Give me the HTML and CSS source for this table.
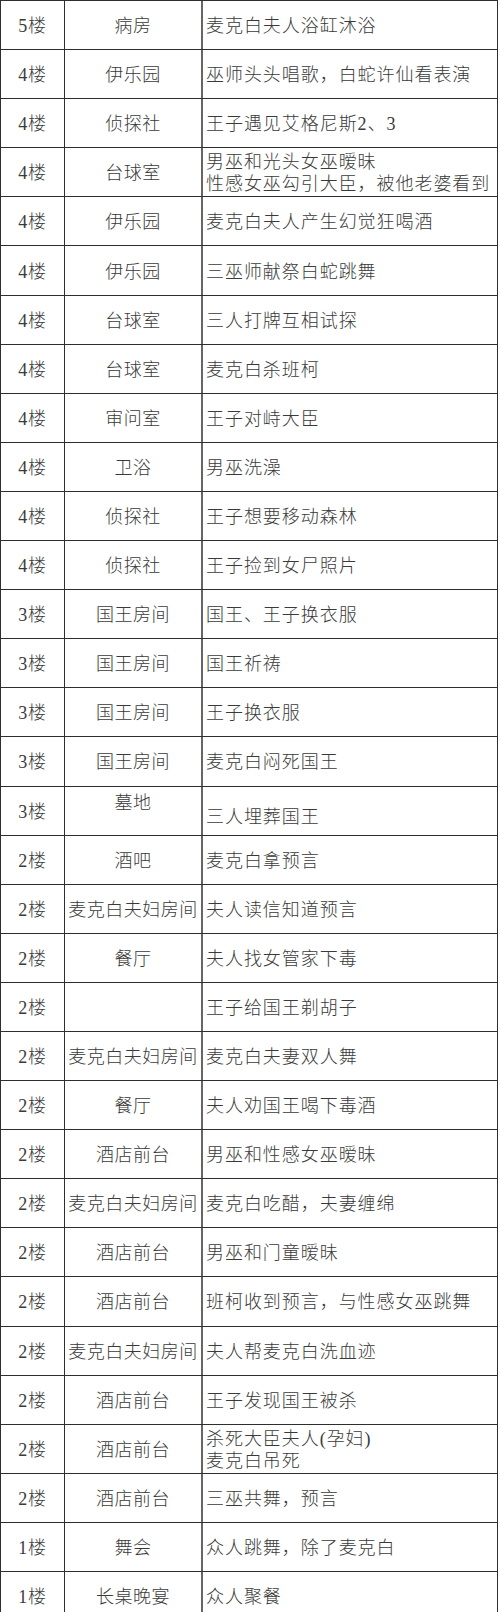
FILE: index.html
```html
<!DOCTYPE html>
<html lang="zh-CN">
<head>
<meta charset="utf-8">
<title>麦克白场景表</title>
<link rel="stylesheet" href="styles.css">
</head>
<body>
<div class="table">
  <div class="row"><div class="cell floor">5楼</div><div class="cell room">病房</div><div class="cell scene">麦克白夫人浴缸沐浴</div></div>
  <div class="row"><div class="cell floor">4楼</div><div class="cell room">伊乐园</div><div class="cell scene">巫师头头唱歌，白蛇许仙看表演</div></div>
  <div class="row"><div class="cell floor">4楼</div><div class="cell room">侦探社</div><div class="cell scene">王子遇见艾格尼斯2、3</div></div>
  <div class="row"><div class="cell floor">4楼</div><div class="cell room">台球室</div><div class="cell scene">男巫和光头女巫暧昧<br>性感女巫勾引大臣，被他老婆看到</div></div>
  <div class="row"><div class="cell floor">4楼</div><div class="cell room">伊乐园</div><div class="cell scene">麦克白夫人产生幻觉狂喝酒</div></div>
  <div class="row"><div class="cell floor">4楼</div><div class="cell room">伊乐园</div><div class="cell scene">三巫师献祭白蛇跳舞</div></div>
  <div class="row"><div class="cell floor">4楼</div><div class="cell room">台球室</div><div class="cell scene">三人打牌互相试探</div></div>
  <div class="row"><div class="cell floor">4楼</div><div class="cell room">台球室</div><div class="cell scene">麦克白杀班柯</div></div>
  <div class="row"><div class="cell floor">4楼</div><div class="cell room">审问室</div><div class="cell scene">王子对峙大臣</div></div>
  <div class="row"><div class="cell floor">4楼</div><div class="cell room">卫浴</div><div class="cell scene">男巫洗澡</div></div>
  <div class="row"><div class="cell floor">4楼</div><div class="cell room">侦探社</div><div class="cell scene">王子想要移动森林</div></div>
  <div class="row"><div class="cell floor">4楼</div><div class="cell room">侦探社</div><div class="cell scene">王子捡到女尸照片</div></div>
  <div class="row"><div class="cell floor">3楼</div><div class="cell room">国王房间</div><div class="cell scene">国王、王子换衣服</div></div>
  <div class="row"><div class="cell floor">3楼</div><div class="cell room">国王房间</div><div class="cell scene">国王祈祷</div></div>
  <div class="row"><div class="cell floor">3楼</div><div class="cell room">国王房间</div><div class="cell scene">王子换衣服</div></div>
  <div class="row"><div class="cell floor">3楼</div><div class="cell room">国王房间</div><div class="cell scene">麦克白闷死国王</div></div>
  <div class="row"><div class="cell floor">3楼</div><div class="cell room room-top">墓地</div><div class="cell scene scene-low">三人埋葬国王</div></div>
  <div class="row"><div class="cell floor">2楼</div><div class="cell room">酒吧</div><div class="cell scene">麦克白拿预言</div></div>
  <div class="row"><div class="cell floor">2楼</div><div class="cell room">麦克白夫妇房间</div><div class="cell scene">夫人读信知道预言</div></div>
  <div class="row"><div class="cell floor">2楼</div><div class="cell room">餐厅</div><div class="cell scene">夫人找女管家下毒</div></div>
  <div class="row"><div class="cell floor">2楼</div><div class="cell room"></div><div class="cell scene">王子给国王剃胡子</div></div>
  <div class="row"><div class="cell floor">2楼</div><div class="cell room">麦克白夫妇房间</div><div class="cell scene">麦克白夫妻双人舞</div></div>
  <div class="row"><div class="cell floor">2楼</div><div class="cell room">餐厅</div><div class="cell scene">夫人劝国王喝下毒酒</div></div>
  <div class="row"><div class="cell floor">2楼</div><div class="cell room">酒店前台</div><div class="cell scene">男巫和性感女巫暧昧</div></div>
  <div class="row"><div class="cell floor">2楼</div><div class="cell room">麦克白夫妇房间</div><div class="cell scene">麦克白吃醋，夫妻缠绵</div></div>
  <div class="row"><div class="cell floor">2楼</div><div class="cell room">酒店前台</div><div class="cell scene">男巫和门童暧昧</div></div>
  <div class="row"><div class="cell floor">2楼</div><div class="cell room">酒店前台</div><div class="cell scene">班柯收到预言，与性感女巫跳舞</div></div>
  <div class="row"><div class="cell floor">2楼</div><div class="cell room">麦克白夫妇房间</div><div class="cell scene">夫人帮麦克白洗血迹</div></div>
  <div class="row"><div class="cell floor">2楼</div><div class="cell room">酒店前台</div><div class="cell scene">王子发现国王被杀</div></div>
  <div class="row"><div class="cell floor">2楼</div><div class="cell room">酒店前台</div><div class="cell scene">杀死大臣夫人(孕妇)<br>麦克白吊死</div></div>
  <div class="row"><div class="cell floor">2楼</div><div class="cell room">酒店前台</div><div class="cell scene">三巫共舞，预言</div></div>
  <div class="row"><div class="cell floor">1楼</div><div class="cell room">舞会</div><div class="cell scene">众人跳舞，除了麦克白</div></div>
  <div class="row"><div class="cell floor">1楼</div><div class="cell room">长桌晚宴</div><div class="cell scene">众人聚餐</div></div>
</div>
</body>
</html>
```

FILE: styles.css
```css
html, body {
  margin: 0;
  padding: 0;
  background: #ffffff;
}

body {
  width: 500px;
  height: 1612px;
  overflow: hidden;
  font-family: "Liberation Serif", "Noto Sans CJK SC", serif;
  font-size: 18px;
  font-weight: 300;
  letter-spacing: 0.7px;
  color: #3a3a3a;
}

.table {
  width: 498px;
  box-sizing: border-box;
  border-top: 1px solid #2e2e2e;
  border-left: 1px solid #2e2e2e;
  border-right: 1px solid #2e2e2e;
}

.row {
  display: grid;
  grid-template-columns: 64px 138px 1fr;
  height: 49.1px;
  box-sizing: border-box;
  border-bottom: 1px solid #2e2e2e;
}

.cell {
  display: flex;
  align-items: center;
  line-height: 22px;
  white-space: nowrap;
  padding-top: 2px;
  box-sizing: border-box;
}

.floor {
  justify-content: center;
  border-right: 1px solid #2e2e2e;
}

.room {
  justify-content: center;
  border-right: 2px solid #666666;
  letter-spacing: 0.5px;
}

.scene {
  padding-left: 3px;
  letter-spacing: 0.95px;
}

.room-top {
  align-items: flex-start;
  padding-top: 5px;
}

.scene-low {
  padding-top: 12px;
}
```
